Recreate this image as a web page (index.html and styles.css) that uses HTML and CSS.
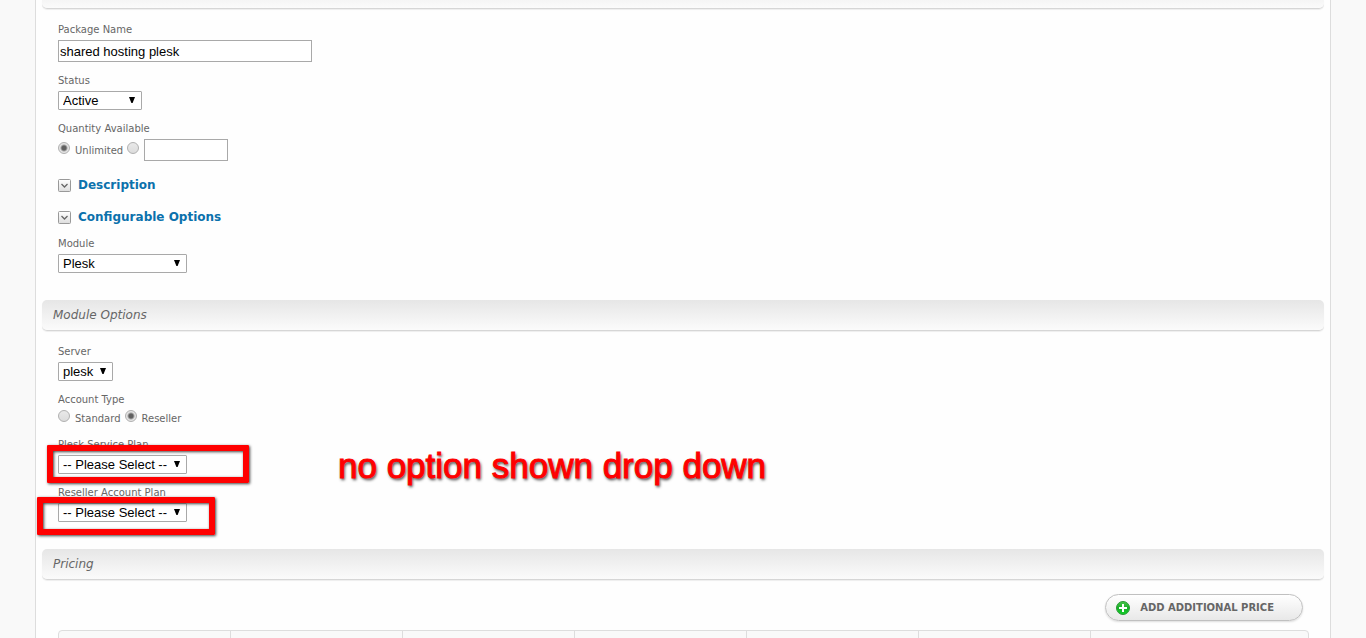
FILE: index.html
```html
<!DOCTYPE html>
<html lang="en">
<head>
<meta charset="utf-8">
<title>Edit Package</title>
<link rel="stylesheet" href="styles.css">
</head>
<body>
<main class="panel">
  <div class="bar bar-end"></div>
  <section class="fields basic">
    <div class="field">
      <label for="name">Package Name</label>
      <input class="text name" id="name" type="text" value="shared hosting plesk">
    </div>
    <div class="field">
      <label for="status">Status</label>
      <span class="select status"><select id="status"><option>Active</option></select></span>
    </div>
    <div class="field">
      <label for="qty">Quantity Available</label>
      <div class="choices">
        <input type="radio" name="qtype" id="unlimited" checked><label for="unlimited">Unlimited</label>
        <input type="radio" name="qtype" id="limited" aria-label="Limited">
        <input class="text qty" id="qty" type="text">
      </div>
    </div>
    <a class="expand first" href="#description"><svg class="toggle" viewBox="0 0 13 13"><defs><linearGradient id="t" x2="0" y2="1"><stop stop-color="#fff"/><stop offset="1" stop-color="#ddd"/></linearGradient></defs><rect x=".5" y=".5" width="12" height="12" rx="1" fill="url(#t)" stroke="#999"/><path d="M3.5 5l3 3 3-3" fill="none" stroke="#666" stroke-width="1.3"/></svg>Description</a>
    <a class="expand" href="#options"><svg class="toggle" viewBox="0 0 13 13"><rect x=".5" y=".5" width="12" height="12" rx="1" fill="url(#t)" stroke="#999"/><path d="M3.5 5l3 3 3-3" fill="none" stroke="#666" stroke-width="1.3"/></svg>Configurable Options</a>
    <div class="field">
      <label for="module">Module</label>
      <span class="select wide"><select id="module"><option>Plesk</option></select></span>
    </div>
  </section>

  <h2 class="bar">Module Options</h2>
  <section class="fields">
    <div class="field">
      <label for="server">Server</label>
      <span class="select server"><select id="server"><option>plesk</option></select></span>
    </div>
    <div class="field">
      <label>Account Type</label>
      <div class="choices short">
        <input type="radio" name="account" id="standard"><label for="standard">Standard</label>
        <input type="radio" name="account" id="reseller" checked><label for="reseller">Reseller</label>
      </div>
    </div>
    <div class="field">
      <label for="service">Plesk Service Plan</label>
      <span class="select wide"><select id="service"><option>-- Please Select --</option></select></span>
    </div>
    <div class="field">
      <label for="plan">Reseller Account Plan</label>
      <span class="select wide"><select id="plan"><option>-- Please Select --</option></select></span>
    </div>
  </section>

  <h2 class="bar">Pricing</h2>
  <section class="pricing">
    <button class="add" type="button"><svg class="plus" viewBox="0 0 14 14"><defs><linearGradient id="g" x2="0" y2="1"><stop stop-color="#4cc44c"/><stop offset=".5" stop-color="#16b026"/><stop offset="1" stop-color="#12cf2a"/></linearGradient></defs><circle cx="7" cy="7" r="6.5" fill="url(#g)" stroke="#2a9a35"/><path d="M7 3v8M3 7h8" stroke="#fff" stroke-width="2"/></svg>Add Additional Price</button>
    <table class="prices"><tr><th></th><th></th><th></th><th></th><th></th><th></th><th class="last"></th></tr></table>
  </section>
</main>
<div class="mark mark-service"></div>
<div class="mark mark-plan"></div>
<div class="note">no option shown drop down</div>
</body>
</html>
```
FILE: styles.css
```css
* { box-sizing: border-box; }
html { height: 100%; overflow: hidden; }
body {
  position: relative;
  min-height: 100%;
  margin: 0;
  padding: 0 35px;
  background: #f9f9f9;
  color: #666;
  font: 10px/16px "DejaVu Sans", Verdana, sans-serif;
}
.panel {
  padding: 0 6px;
  border: solid #ddd;
  border-width: 0 1px;
  background: #fefefe;
}
.bar {
  height: 31px;
  margin: 0;
  padding: 0 11px;
  border-bottom: 1px solid #d6d6d6;
  border-radius: 5px;
  background: linear-gradient(#e6e6e6, #fbfbfb);
  box-shadow: 0 1px 1px #eee;
  font: italic 12px/30px "DejaVu Sans", Verdana, sans-serif;
}
.bar-end {
  height: 9px;
  border-radius: 0 0 5px 5px;
  background: linear-gradient(#f5f5f5, #fbfbfb);
}
.fields {
  display: flex;
  flex-direction: column;
  align-items: flex-start;
  gap: 11px;
  padding: 13px 16px 27px;
}
.field { display: flex; flex-direction: column; align-items: flex-start; gap: 2px; }
.text {
  height: 22px;
  margin: 0;
  padding: 1px;
  border: 1px solid #a9a9a9;
  background: #fff;
  color: #000;
  font: 13px "Liberation Sans", Arial, sans-serif;
}
.name { width: 254px; }
.qty { width: 84px; }
.select { position: relative; display: flex; height: 19px; }
.select::after {
  content: "";
  position: absolute;
  top: 6px;
  right: 7px;
  width: 6px;
  height: 6px;
  background: #000;
  clip-path: polygon(0 0, 100% 0, 60% 100%, 40% 100%);
  pointer-events: none;
}
.select select {
  width: 100%;
  margin: 0;
  padding: 0 4px;
  appearance: none;
  border: 1px solid #a9a9a9;
  border-radius: 1px;
  background: #fff;
  color: #000;
  font: 13px/17px "Liberation Sans", Arial, sans-serif;
}
.status { width: 84px; }
.wide { width: 129px; }
.server { width: 55px; }
.choices { display: flex; align-items: center; height: 22px; gap: 4px; }
.choices label { padding-top: 2px; }
.choices.short { height: 16px; }
.choices input[type="radio"] {
  appearance: none;
  width: 12px;
  height: 12px;
  margin: 0 1px 5px 0;
  border: 1px solid #b0b0b0;
  border-radius: 50%;
  background: linear-gradient(#e9e9e9, #dcdcdc);
}
.choices input[type="radio"]:checked {
  background: radial-gradient(circle, #606060 0 2px, #606060 2px, #e4e4e4 4px);
}
.expand {
  display: flex;
  align-items: center;
  gap: 7px;
  margin-bottom: 5px;
  color: #0b71ac;
  font-size: 12px;
  line-height: 17px;
  font-weight: bold;
  text-decoration: none;
}
.expand + .expand { margin-top: -1px; }
.expand + .field { margin-top: -6px; }
.first { margin-top: 5px; }
.toggle { width: 13px; height: 13px; }
.pricing {
  display: flex;
  flex-direction: column;
  align-items: flex-end;
  gap: 9px;
  padding: 14px 15px 0 16px;
}
.add {
  display: flex;
  align-items: center;
  gap: 10px;
  height: 27px;
  margin-right: 6px;
  padding: 0 28px 0 10px;
  border: 1px solid #c0c0c0;
  border-radius: 14px;
  background: linear-gradient(#fff, #e8e8e8);
  box-shadow: 0 1px 2px #ddd;
  color: #666;
  font: bold 10px "DejaVu Sans", Verdana, sans-serif;
  text-transform: uppercase;
}
.plus { width: 14px; height: 14px; }
.prices {
  width: 100%;
  table-layout: fixed;
  border: 1px solid #ddd;
  border-radius: 4px;
  border-spacing: 0;
  background: #f9f9f9;
}
.prices th { width: 172px; height: 30px; padding: 0; border-right: 1px solid #ddd; }
.prices .last { width: auto; border-right: 0; }
.mark {
  position: absolute;
  height: 38px;
  border: 6px solid #f00;
  border-radius: 1px;
  box-shadow: 1px 1px 3px #444, inset 1px 1px 3px #444;
  pointer-events: none;
}
.mark-service { left: 47px; top: 445px; width: 202px; }
.mark-plan { left: 37px; top: 497px; width: 178px; }
.note {
  position: absolute;
  left: 338px;
  top: 446px;
  color: #f00;
  font: 35px/40px "Liberation Sans", Arial, sans-serif;
  -webkit-text-stroke: 1px #f00;
  text-shadow: 1px 2px 3px #333;
  white-space: nowrap;
}
```
